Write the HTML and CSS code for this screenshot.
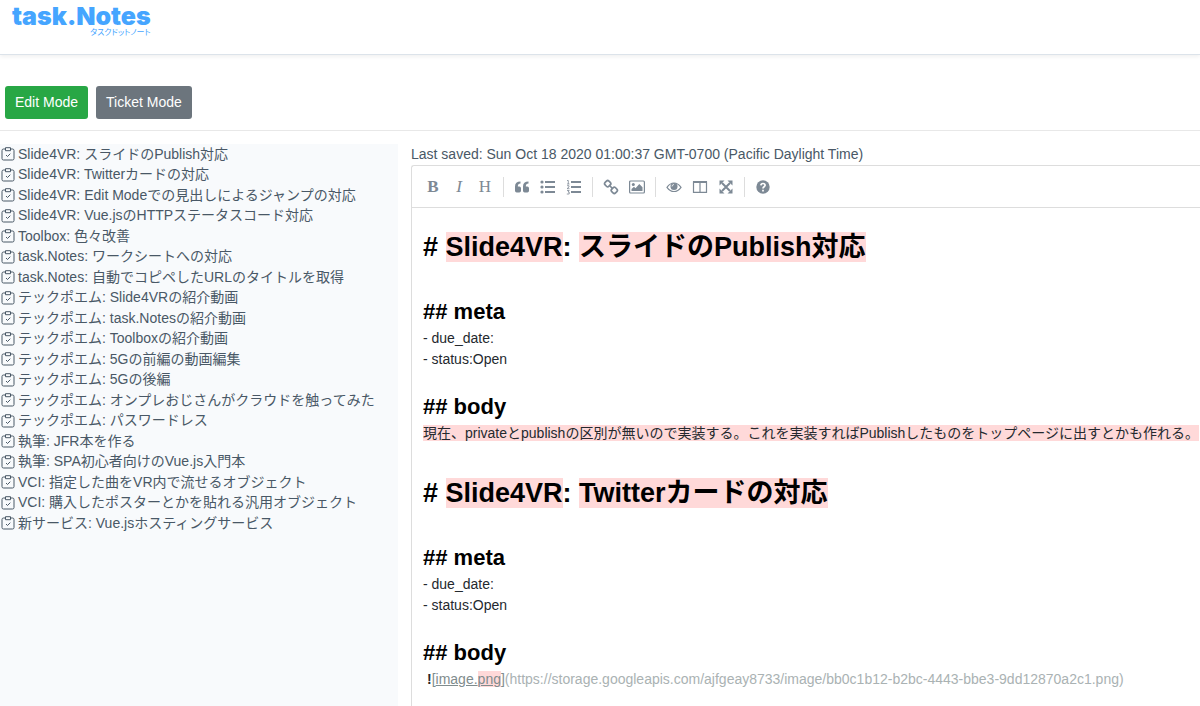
FILE: index.html
```html
<!DOCTYPE html>
<html lang="ja">
<head>
    <meta charset="UTF-8">
    <meta name="viewport" content="width=device-width, initial-scale=1.0">
    <title>task.Notes</title>
    <link rel="stylesheet" href="styles.css">
</head>
<body>
    <!-- アイコン定義 -->
    <svg class="defs" aria-hidden="true">
        <symbol id="icon-task" viewBox="0 0 14 14">
            <path d="M4 2H2.500Q1 2 1 3.500V11.500Q1 13 2.500 13H11.500Q13 13 13 11.500V3.500Q13 2 11.500 2H10M4.500 .7H9.500V3.700H4.500ZM5 8L6.500 9.500L9.300 6.700" fill="none" stroke="currentColor"/>
        </symbol>
    </svg>

    <!-- ヘッダー -->
    <header class="header">
        <a class="logo" href="#">
            <span class="logo-name">task.Notes</span>
            <span class="logo-kana">タスクドットノート</span>
        </a>
    </header>

    <!-- モード切り替え -->
    <div class="modes">
        <button type="button" class="btn btn-edit">Edit Mode</button>
        <button type="button" class="btn btn-ticket">Ticket Mode</button>
    </div>

    <main class="main">
        <!-- タスク一覧 -->
        <nav class="sidebar">
            <ul class="tasks">
                <li><a href="#"><svg><use href="#icon-task"/></svg>Slide4VR: スライドのPublish対応</a></li>
                <li><a href="#"><svg><use href="#icon-task"/></svg>Slide4VR: Twitterカードの対応</a></li>
                <li><a href="#"><svg><use href="#icon-task"/></svg>Slide4VR: Edit Modeでの見出しによるジャンプの対応</a></li>
                <li><a href="#"><svg><use href="#icon-task"/></svg>Slide4VR: Vue.jsのHTTPステータスコード対応</a></li>
                <li><a href="#"><svg><use href="#icon-task"/></svg>Toolbox: 色々改善</a></li>
                <li><a href="#"><svg><use href="#icon-task"/></svg>task.Notes: ワークシートへの対応</a></li>
                <li><a href="#"><svg><use href="#icon-task"/></svg>task.Notes: 自動でコピペしたURLのタイトルを取得</a></li>
                <li><a href="#"><svg><use href="#icon-task"/></svg>テックポエム: Slide4VRの紹介動画</a></li>
                <li><a href="#"><svg><use href="#icon-task"/></svg>テックポエム: task.Notesの紹介動画</a></li>
                <li><a href="#"><svg><use href="#icon-task"/></svg>テックポエム: Toolboxの紹介動画</a></li>
                <li><a href="#"><svg><use href="#icon-task"/></svg>テックポエム: 5Gの前編の動画編集</a></li>
                <li><a href="#"><svg><use href="#icon-task"/></svg>テックポエム: 5Gの後編</a></li>
                <li><a href="#"><svg><use href="#icon-task"/></svg>テックポエム: オンプレおじさんがクラウドを触ってみた</a></li>
                <li><a href="#"><svg><use href="#icon-task"/></svg>テックポエム: パスワードレス</a></li>
                <li><a href="#"><svg><use href="#icon-task"/></svg>執筆: JFR本を作る</a></li>
                <li><a href="#"><svg><use href="#icon-task"/></svg>執筆: SPA初心者向けのVue.js入門本</a></li>
                <li><a href="#"><svg><use href="#icon-task"/></svg>VCI: 指定した曲をVR内で流せるオブジェクト</a></li>
                <li><a href="#"><svg><use href="#icon-task"/></svg>VCI: 購入したポスターとかを貼れる汎用オブジェクト</a></li>
                <li><a href="#"><svg><use href="#icon-task"/></svg>新サービス: Vue.jsホスティングサービス</a></li>
            </ul>
        </nav>

        <!-- エディタ -->
        <section class="content">
            <p class="saved">Last saved: Sun Oct 18 2020 01:00:37 GMT-0700 (Pacific Daylight Time)</p>
            <div class="editor">
                <div class="toolbar">
                    <button type="button" class="tool bold" title="Bold">B</button>
                    <button type="button" class="tool italic" title="Italic">I</button>
                    <button type="button" class="tool" title="Heading">H</button>
                    <i class="separator"></i>
                    <button type="button" class="tool" title="Quote">
                        <svg viewBox="0 0 16 16"><path d="M6.500 2.500V4.500Q3.800 4.500 3.800 7.500H5.300Q7 7.500 7 9.200V11.800Q7 13.500 5.300 13.500H2.700Q1 13.500 1 11.800V7.500Q1 2.500 6.500 2.500ZM14.500 2.500V4.500Q11.800 4.500 11.800 7.500H13.300Q15 7.500 15 9.200V11.800Q15 13.500 13.300 13.500H10.700Q9 13.500 9 11.800V7.500Q9 2.500 14.500 2.500Z"/></svg>
                    </button>
                    <button type="button" class="tool" title="Generic List">
                        <svg viewBox="0 0 16 16"><circle cx="2" cy="3" r="1.600"/><circle cx="2" cy="8" r="1.600"/><circle cx="2" cy="13" r="1.600"/><path d="M5 2H15V4H5ZM5 7H15V9H5ZM5 12H15V14H5Z"/></svg>
                    </button>
                    <button type="button" class="tool" title="Numbered List">
                        <svg viewBox="0 0 16 16"><path d="M5 2H15V4H5ZM5 7H15V9H5ZM5 12H15V14H5Z"/><path d="M1 1.500H2.300V5M1 5H3.500M1 6.700H3V8L1 9.700H3.500M1 11.500H3.200L2 13H3.200V15H.8" fill="none" stroke="currentColor" stroke-width=".8"/></svg>
                    </button>
                    <i class="separator"></i>
                    <button type="button" class="tool" title="Create Link">
                        <svg viewBox="0 0 16 16"><g fill="none" stroke="currentColor" stroke-width="1.700"><rect x="2" y="2" width="5.400" height="5.400" rx="1.800" transform="rotate(45 4.700 4.700)"/><rect x="8.600" y="8.600" width="5.400" height="5.400" rx="1.800" transform="rotate(45 11.300 11.300)"/><path d="M6 6L10 10"/></g></svg>
                    </button>
                    <button type="button" class="tool" title="Insert Image">
                        <svg viewBox="0 0 16 16"><rect x=".6" y="2" width="14.800" height="12" rx="1" fill="none" stroke="currentColor" stroke-width="1.200"/><circle cx="4.300" cy="5.500" r="1.500"/><path d="M2.500 12V10L5 7.700L6.500 9.200L10.300 5L13.500 8.300V12Z"/></svg>
                    </button>
                    <i class="separator"></i>
                    <button type="button" class="tool" title="Toggle Preview">
                        <svg viewBox="0 0 16 16"><path d="M1 8.300Q4 4 8 4T15 8.300Q12 12.500 8 12.500T1 8.300Z" fill="none" stroke="currentColor" stroke-width="1.200"/><circle cx="8" cy="7.600" r="3.500"/><path d="M6 7.500Q6 5.500 8 5.500" fill="none" stroke="#fff" stroke-width=".8"/></svg>
                    </button>
                    <button type="button" class="tool" title="Toggle Side by Side">
                        <svg viewBox="0 0 16 16"><path d="M1.500 3H14.500V13.400H1.500ZM8 3V13.400" fill="none" stroke="currentColor" stroke-width="1.200"/><path d="M1 2H15V4H1Z"/></svg>
                    </button>
                    <button type="button" class="tool" title="Toggle Fullscreen">
                        <svg viewBox="0 0 16 16"><path d="M1.500 1.500H6.500L1.500 6.500ZM14.500 1.500V6.500L9.500 1.500ZM1.500 14.500V9.500L6.500 14.500ZM14.500 14.500H9.500L14.500 9.500Z"/><path d="M4 4L12 12M12 4L4 12" stroke="currentColor" stroke-width="2"/></svg>
                    </button>
                    <i class="separator"></i>
                    <button type="button" class="tool" title="Markdown Guide">
                        <svg viewBox="0 0 16 16"><circle cx="8" cy="8" r="6.700"/><path d="M5.900 6.400Q6 4.500 8 4.500T10.100 6.300C10.100 7.800 8 7.700 8 9.400M8 10.700V12.400" fill="none" stroke="#fff" stroke-width="1.700"/></svg>
                    </button>
                </div>
                <div class="code" role="textbox" aria-multiline="true" aria-label="Markdown" contenteditable="true" spellcheck="false">
                    <div class="line header-1"># <mark>Slide4VR</mark>: <mark>スライドのPublish対応</mark></div>
                    <div class="line"><br></div>
                    <div class="line header-2">## meta</div>
                    <div class="line">- due_date:</div>
                    <div class="line">- status:Open</div>
                    <div class="line"><br></div>
                    <div class="line header-2">## body</div>
                    <div class="line"><mark>現在、privateとpublishの区別が無いので実装する。これを実装すればPublishしたものをトップページに出すとかも作れる。</mark></div>
                    <div class="line"><br></div>
                    <div class="line header-1"># <mark>Slide4VR</mark>: <mark>Twitterカードの対応</mark></div>
                    <div class="line"><br></div>
                    <div class="line header-2">## meta</div>
                    <div class="line">- due_date:</div>
                    <div class="line">- status:Open</div>
                    <div class="line"><br></div>
                    <div class="line header-2">## body</div>
                    <div class="line indent"><b>!</b><span class="link">[<u>image.<mark>png</mark></u>]</span><span class="url">(https://storage.googleapis.com/ajfgeay8733/image/bb0c1b12-b2bc-4443-bbe3-9dd12870a2c1.png)</span></div>
                </div>
            </div>
        </section>
    </main>
</body>
</html>
```

FILE: styles.css
```css
/* 全体 */
* {
    box-sizing: border-box;
}

body {
    margin: 0;
    min-height: 100vh;
    display: flex;
    flex-direction: column;
    overflow-x: hidden;
    background: #fff;
    color: #495866;
    font-family: "Liberation Sans", "Noto Sans CJK JP", sans-serif;
    font-size: 14px;
    line-height: 21px;
}

.defs {
    position: absolute;
    width: 0;
    height: 0;
}

/* ヘッダー */
.header {
    height: 55px;
    padding: 4px 12px;
    border-bottom: 1px solid #dce3ea;
    box-shadow: 0 2px 4px rgba(0, 0, 0, 0.06);
}

.logo {
    display: inline-flex;
    flex-direction: column;
    align-items: flex-end;
    color: #45a5ff;
    text-decoration: none;
}

.logo-name {
    font-family: Inter, sans-serif;
    font-size: 25px;
    font-weight: 900;
    line-height: 24px;
}

.logo-kana {
    font-size: 8px;
    line-height: 10px;
    font-feature-settings: "palt";
}

/* モード切り替え */
.modes {
    display: flex;
    gap: 8px;
    padding: 31px 5px 11px;
    margin-bottom: 13px;
    border-bottom: 1px solid #e8e8e8;
}

.btn {
    height: 33px;
    padding: 0 10px;
    border: none;
    border-radius: 3px;
    color: #fff;
    font: inherit;
    cursor: pointer;
}

.btn-edit {
    background: #28a745;
}

.btn-ticket {
    background: #6c757d;
}

/* メイン */
.main {
    flex: 1;
    display: flex;
    gap: 13px;
}

.sidebar {
    flex: 0 0 398px;
    background: #f8fafc;
}

.tasks {
    margin: 0;
    padding: 0 0 0 1px;
    list-style: none;
    white-space: nowrap;
}

.tasks li {
    line-height: 21px;
}

.tasks li:nth-child(odd) {
    line-height: 20px;
}

.tasks a {
    display: flex;
    align-items: center;
    gap: 3px;
    color: inherit;
    text-decoration: none;
}

.tasks svg {
    width: 14px;
    height: 14px;
}

.content {
    flex: 1;
    min-width: 0;
    display: flex;
    flex-direction: column;
}

.saved {
    margin: 0;
}

/* エディタ */
.editor {
    flex: 1;
    border: 1px solid #ddd;
    border-right: none;
    border-bottom: none;
    border-radius: 3px 0 0 0;
}

.toolbar {
    display: flex;
    align-items: center;
    height: 42px;
    padding: 0 8px;
    border-bottom: 1px solid #ddd;
}

.tool {
    display: flex;
    align-items: center;
    justify-content: center;
    width: 26px;
    height: 26px;
    padding: 0;
    border: none;
    background: none;
    color: #7d8995;
    font-family: "Liberation Serif", serif;
    font-size: 17px;
    cursor: pointer;
}

.tool svg {
    width: 16px;
    height: 16px;
    fill: currentColor;
}

.bold {
    font-weight: bold;
}

.italic {
    font-style: italic;
}

.separator {
    width: 1px;
    height: 20px;
    margin: 0 5px;
    background: #ddd;
}

.code {
    padding: 11px 11px 0;
    color: #24292e;
    outline: none;
}

.line {
    white-space: nowrap;
}

.header-1,
.header-2 {
    color: #000;
    font-weight: bold;
}

.header-1 {
    font-size: 27px;
    line-height: 56px;
}

.header-2 {
    font-size: 22px;
    line-height: 32px;
}

.indent {
    padding-left: 4px;
}

/* スペルチェックの強調 */
mark {
    background: #ffd9d9;
    color: inherit;
}

.link {
    color: #7f8c8d;
}

.url {
    color: #aab2b3;
}
```
